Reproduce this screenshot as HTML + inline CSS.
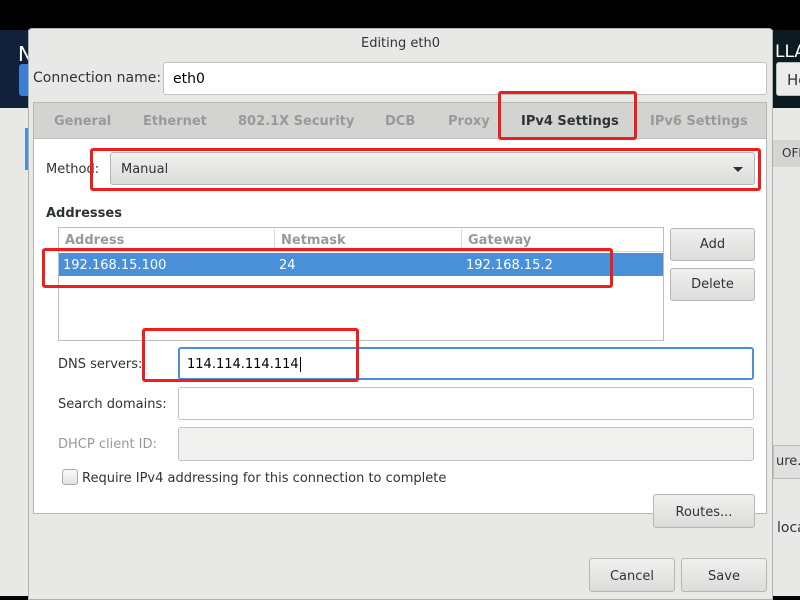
<!DOCTYPE html>
<html><head><style>
*{box-sizing:border-box;margin:0;padding:0}
body{width:800px;height:600px;background:#000;position:relative;overflow:hidden;font-family:"DejaVu Sans","Liberation Sans",sans-serif;font-size:13px;color:#2e3436}
.a{position:absolute}
.t{position:absolute;margin-top:2px}
.btn{position:absolute;border:1px solid #b6b6b3;border-radius:3px;background:linear-gradient(#f0f0ef,#dcdcda);text-align:center;color:#2e3436}
.inp{position:absolute;background:#fff;border:1px solid #c2c2c0;border-radius:3px}
.red{position:absolute;border:3px solid #f01d1d;border-radius:3px}
.tab{position:absolute;top:114px;font-weight:bold;color:#999}
</style></head><body>
<div class="a" style="left:0;top:30px;width:800px;height:566px;background:#e8e8e7"></div>
<div class="a" style="left:0;top:30px;width:28px;height:78px;background:#12213b"></div>
<div class="a" style="left:18px;top:42px;color:#fff;font-size:20px">N</div>
<div class="a" style="left:19px;top:64px;width:9px;height:32px;background:#3b7fd4;border-radius:3px 0 0 3px"></div>
<div class="a" style="left:25px;top:128px;width:3px;height:42px;background:#4a90d9"></div>
<div class="a" style="left:773px;top:30px;width:27px;height:78px;background:#0c1a22"></div>
<div class="a" style="left:775px;top:42px;color:#fff;font-size:17px">LLAT</div>
<div class="a" style="left:776px;top:62px;width:30px;height:34px;background:#ececec;border:1px solid #bbb;border-radius:3px;padding:8px 0 0 10px;font-size:15px">He</div>
<div class="a" style="left:773px;top:140px;width:27px;height:27px;background:#d4d4d3;font-size:12px;padding:6px 0 0 9px">OFF</div>
<div class="a" style="left:773px;top:445px;width:30px;height:34px;background:#e0e0de;border:1px solid #bbb;font-size:13px;padding:8px 0 0 2px">ure...</div>
<div class="a" style="left:777px;top:520px;font-size:14px">loca</div>
<div class="a" style="left:0;top:596px;width:800px;height:4px;background:#000"></div>

<div class="a" style="left:28px;top:28px;width:745px;height:572px;background:#e8e8e7;border:1px solid #b0b0ad;border-radius:4px 4px 0 0"></div>
<div class="a" style="left:28px;top:36px;width:745px;text-align:center">Editing eth0</div>
<div class="a" style="left:33px;top:70px;font-size:14px">Connection name:</div>
<div class="inp" style="left:163px;top:62px;width:604px;height:33px;padding:8px 9px;font-size:14px;color:#000">eth0</div>

<div class="a" style="left:33px;top:102px;width:734px;height:412px;background:#fff;border:1px solid #b6b6b3"></div>
<div class="a" style="left:34px;top:103px;width:732px;height:36px;background:#d3d3d2;border-bottom:1px solid #c0c0be"></div>
<div class="tab" style="left:54px">General</div>
<div class="tab" style="left:143px">Ethernet</div>
<div class="tab" style="left:238px">802.1X Security</div>
<div class="tab" style="left:385px">DCB</div>
<div class="tab" style="left:448px">Proxy</div>
<div class="tab" style="left:521px;color:#2e3436">IPv4 Settings</div>
<div class="tab" style="left:650px">IPv6 Settings</div>
<div class="red" style="left:498px;top:91px;width:139px;height:49px"></div>

<div class="a" style="left:46px;top:162px">Method:</div>
<div class="btn" style="left:110px;top:152px;width:645px;height:33px;text-align:left;padding:9px 10px">Manual</div>
<div class="a" style="left:733px;top:167px;width:0;height:0;border-left:5px solid transparent;border-right:5px solid transparent;border-top:5px solid #2e3436"></div>
<div class="red" style="left:90px;top:148px;width:671px;height:43px"></div>

<div class="a" style="left:46px;top:206px;font-weight:bold">Addresses</div>
<div class="a" style="left:58px;top:227px;width:606px;height:114px;border:1px solid #bdbdbb;background:#fff"></div>
<div class="a" style="left:59px;top:228px;width:604px;height:24px;border-bottom:1px solid #ddd"></div>
<div class="a" style="left:274px;top:229px;width:1px;height:22px;background:#ddd"></div>
<div class="a" style="left:461px;top:229px;width:1px;height:22px;background:#ddd"></div>
<div class="a" style="left:65px;top:233px;font-weight:bold;color:#999">Address</div>
<div class="a" style="left:281px;top:233px;font-weight:bold;color:#999">Netmask</div>
<div class="a" style="left:468px;top:233px;font-weight:bold;color:#999">Gateway</div>
<div class="a" style="left:59px;top:253px;width:604px;height:23px;background:#4a90d9"></div>
<div class="a" style="left:63px;top:258px;color:#fff">192.168.15.100</div>
<div class="a" style="left:279px;top:258px;color:#fff">24</div>
<div class="a" style="left:466px;top:258px;color:#fff">192.168.15.2</div>
<div class="red" style="left:42px;top:248px;width:571px;height:40px"></div>
<div class="btn" style="left:670px;top:228px;width:85px;height:33px;padding-top:8px">Add</div>
<div class="btn" style="left:670px;top:268px;width:85px;height:33px;padding-top:8px">Delete</div>

<div class="a" style="left:58px;top:357px">DNS servers:</div>
<div class="inp" style="left:178px;top:347px;width:576px;height:33px;border:2px solid #4a90d9;padding:8px 7px;color:#000">114.114.114.114<span style="border-left:1px solid #000;margin-left:1px"></span></div>
<div class="red" style="left:142px;top:328px;width:217px;height:54px"></div>
<div class="a" style="left:58px;top:397px">Search domains:</div>
<div class="inp" style="left:178px;top:387px;width:576px;height:33px"></div>
<div class="a" style="left:58px;top:437px;color:#999">DHCP client ID:</div>
<div class="inp" style="left:178px;top:427px;width:576px;height:34px;background:#f0f0ef"></div>
<div class="a" style="left:62px;top:469px;width:16px;height:16px;border:1px solid #aaa;border-radius:3px;background:linear-gradient(#fafafa,#e2e2e0)"></div>
<div class="a" style="left:82px;top:471px">Require IPv4 addressing for this connection to complete</div>
<div class="btn" style="left:653px;top:494px;width:102px;height:34px;padding-top:10px">Routes...</div>

<div class="btn" style="left:589px;top:558px;width:86px;height:34px;padding-top:10px">Cancel</div>
<div class="btn" style="left:681px;top:558px;width:86px;height:34px;padding-top:10px">Save</div>
</body></html>
